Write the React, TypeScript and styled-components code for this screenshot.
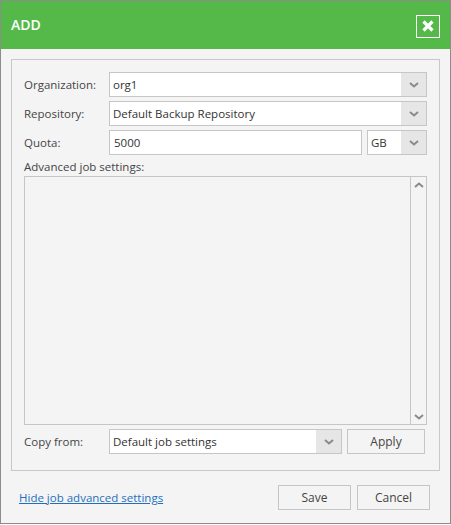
import * as React from 'react';
import styled, { createGlobalStyle } from 'styled-components';

const GlobalStyle = createGlobalStyle`
    html, body {
        margin: 0;
        padding: 0;
        background: #ffffff;
    }
    body {
        font-family: 'Open Sans', 'Noto Sans', 'DejaVu Sans', sans-serif;
        font-size: 11.5px;
        color: #444444;
    }
`;

const Chevron: React.FC<{ up?: boolean }> = ({ up }) => (
    <svg width="10" height="6" viewBox="0 0 10 6">
        <path
            d={up ? 'M1 5 L5 1.5 L9 5' : 'M1 1 L5 4.5 L9 1'}
            fill="none"
            stroke="#8a8a8a"
            strokeWidth="2"
        />
    </svg>
);

const Select: React.FC<{ value: string; width?: number }> = ({ value, width }) => (
    <SelectBox style={width ? { width, flex: 'none' } : undefined}>
        <SelectValue>{value}</SelectValue>
        <SelectArrow>
            <Chevron />
        </SelectArrow>
    </SelectBox>
);

export default function App() {
    return (
        <>
            <GlobalStyle />
            <Dialog>
                <Header>
                    <Title>ADD</Title>
                    <CloseButton aria-label="Close">
                        <svg width="14" height="14" viewBox="0 0 14 14">
                            <path d="M2.5 2.5 L11.5 11.5 M11.5 2.5 L2.5 11.5" stroke="#ffffff" strokeWidth="3.2" />
                        </svg>
                    </CloseButton>
                </Header>
                <Body>
                    <Panel>
                        <FieldRow>
                            <Label>Organization:</Label>
                            <Select value="org1" />
                        </FieldRow>
                        <FieldRow>
                            <Label>Repository:</Label>
                            <Select value="Default Backup Repository" />
                        </FieldRow>
                        <FieldRow>
                            <Label>Quota:</Label>
                            <QuotaGroup>
                                <TextInput>5000</TextInput>
                                <Select value="GB" width={60} />
                            </QuotaGroup>
                        </FieldRow>
                        <AreaLabel>Advanced job settings:</AreaLabel>
                        <SettingsArea>
                            <ScrollBar>
                                <ScrollArrow>
                                    <Chevron up />
                                </ScrollArrow>
                                <ScrollArrow>
                                    <Chevron />
                                </ScrollArrow>
                            </ScrollBar>
                        </SettingsArea>
                        <FieldRow>
                            <Label>Copy from:</Label>
                            <CopyGroup>
                                <Select value="Default job settings" />
                                <Button $width={78}>Apply</Button>
                            </CopyGroup>
                        </FieldRow>
                    </Panel>
                    <Footer>
                        <Link href="#">Hide job advanced settings</Link>
                        <Actions>
                            <Button $width={73}>Save</Button>
                            <Button $width={73}>Cancel</Button>
                        </Actions>
                    </Footer>
                </Body>
            </Dialog>
        </>
    );
}

const Dialog = styled.div`
    box-sizing: border-box;
    width: 451px;
    height: 524px;
    border: 1px solid #8c8c8c;
    background: #f4f4f4;
    display: flex;
    flex-direction: column;
`;

const Header = styled.div`
    height: 48px;
    background: #54b948;
    display: flex;
    align-items: center;
    justify-content: space-between;
    padding: 0 10px 0 10px;
`;

const Title = styled.div`
    color: #ffffff;
    font-size: 14px;
    font-weight: 600;
    margin-top: -1px;
`;

const CloseButton = styled.button`
    box-sizing: border-box;
    width: 24px;
    height: 23px;
    margin-top: 2px;
    padding: 0;
    border: 1px solid #ffffff;
    background: transparent;
    display: flex;
    align-items: center;
    justify-content: center;
`;

const Body = styled.div`
    flex: 1;
    display: flex;
    flex-direction: column;
    padding: 10px 10px 0 10px;
`;

const Panel = styled.div`
    box-sizing: border-box;
    height: 412px;
    border: 1px solid #c8c8c8;
    padding: 12px 12px 16px 12px;
    display: flex;
    flex-direction: column;
    gap: 4px;
`;

const FieldRow = styled.div`
    display: flex;
    align-items: center;
    height: 25px;
    flex: none;
`;

const Label = styled.div`
    width: 85px;
    flex: none;
    color: #444444;
    line-height: 16px;
`;

const SelectBox = styled.div`
    box-sizing: border-box;
    height: 25px;
    border: 1px solid #c6c6c6;
    background: #ffffff;
    display: flex;
    flex: 1 1 auto;
`;

const SelectValue = styled.div`
    flex: 1;
    padding-left: 3px;
    display: flex;
    align-items: center;
    color: #333333;
    white-space: nowrap;
    overflow: hidden;
`;

const SelectArrow = styled.div`
    width: 25px;
    flex: none;
    background: #e6e6e6;
    display: flex;
    align-items: center;
    justify-content: center;
`;

const QuotaGroup = styled.div`
    flex: 1;
    display: flex;
    gap: 5px;
    height: 25px;
`;

const TextInput = styled.div`
    box-sizing: border-box;
    flex: 1;
    height: 25px;
    border: 1px solid #c6c6c6;
    background: #ffffff;
    padding-left: 4px;
    display: flex;
    align-items: center;
    color: #333333;
`;

const AreaLabel = styled.div`
    line-height: 16px;
    height: 13px;
    flex: none;
`;

const SettingsArea = styled.div`
    box-sizing: border-box;
    height: 249px;
    flex: none;
    border: 1px solid #c6c6c6;
    background: #f4f4f4;
    display: flex;
    justify-content: flex-end;
`;

const ScrollBar = styled.div`
    width: 15px;
    border-left: 1px solid #c6c6c6;
    display: flex;
    flex-direction: column;
    justify-content: space-between;
`;

const ScrollArrow = styled.div`
    height: 15px;
    display: flex;
    align-items: center;
    justify-content: center;
`;

const CopyGroup = styled.div`
    flex: 1;
    display: flex;
    gap: 5px;
    height: 25px;
    margin-right: 2px;
`;

const Button = styled.button<{ $width: number }>`
    box-sizing: border-box;
    width: ${p => p.$width}px;
    flex: none;
    height: 25px;
    border: 1px solid #c6c6c6;
    background: #f4f4f4;
    color: #444444;
    font-family: inherit;
    font-size: 12px;
    padding: 0;
`;

const Footer = styled.div`
    display: flex;
    align-items: center;
    justify-content: space-between;
    padding: 14px 10px 0 8px;
`;

const Link = styled.a`
    color: #1f6fbf;
    text-decoration: underline;
    font-size: 11.5px;
`;

const Actions = styled.div`
    display: flex;
    gap: 6px;
`;
